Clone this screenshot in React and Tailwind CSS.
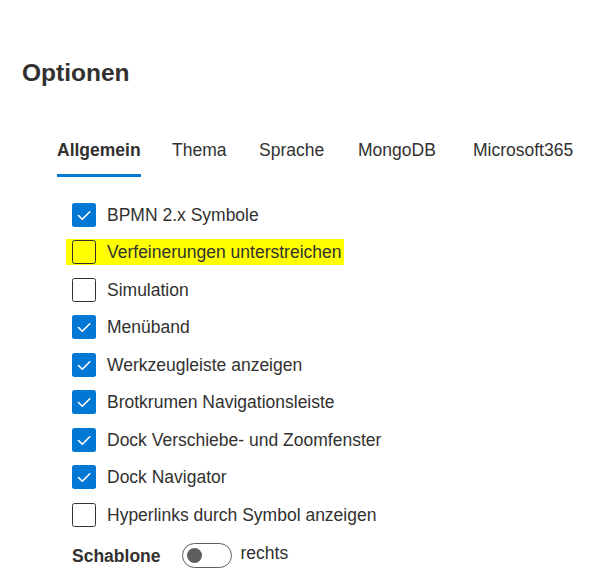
import { useState } from 'react';

const tabs = [
  { label: 'Allgemein', width: 'w-[115px]' },
  { label: 'Thema', width: 'w-[87px]' },
  { label: 'Sprache', width: 'w-[99px]' },
  { label: 'MongoDB', width: 'w-[115px]' },
  { label: 'Microsoft365', width: '' },
];

const initialOptions = [
  { label: 'BPMN 2.x Symbole', checked: true },
  { label: 'Verfeinerungen unterstreichen', checked: false, marked: true },
  { label: 'Simulation', checked: false },
  { label: 'Menüband', checked: true },
  { label: 'Werkzeugleiste anzeigen', checked: true },
  { label: 'Brotkrumen Navigationsleiste', checked: true },
  { label: 'Dock Verschiebe- und Zoomfenster', checked: true },
  { label: 'Dock Navigator', checked: true },
  { label: 'Hyperlinks durch Symbol anzeigen', checked: false },
];

function CheckBox({ checked }) {
  if (checked) {
    return (
      <span className="flex h-[24px] w-[24px] shrink-0 items-center justify-center rounded-[2.5px] bg-[#0078d4]">
        <svg width="24" height="24" viewBox="0 0 24 24" fill="none">
          <polyline points="6.5,12.5 10.3,16.3 17.8,8.8" stroke="#ffffff" strokeWidth="1.6" strokeLinecap="round" strokeLinejoin="round" />
        </svg>
      </span>
    );
  }
  return <span className="block h-[24px] w-[24px] shrink-0 rounded-[2.5px] border border-[#323130]" />;
}

export default function App() {
  const [active, setActive] = useState('Allgemein');
  const [options, setOptions] = useState(initialOptions);
  const [right, setRight] = useState(false);

  const toggle = (i) => {
    setOptions(options.map((o, idx) => (idx === i ? { ...o, checked: !o.checked } : o)));
  };

  return (
    <div className="min-h-[573px] w-[598px] bg-white text-[#323130]" style={{ fontFamily: '"Liberation Sans", Arial, sans-serif' }}>
      <h1 className="pl-[22px] pt-[57px] text-[24.5px] font-bold leading-[32px]">Optionen</h1>

      <div className="mt-[49px] flex pl-[57px]">
        {tabs.map((t) => (
          <button key={t.label} onClick={() => setActive(t.label)} className={`${t.width} flex flex-col items-start text-left`}>
            <span className="flex flex-col">
              <span className={`text-[17.5px] leading-[24px] ${active === t.label ? 'font-bold' : ''}`}>{t.label}</span>
              <span className={`mt-[12px] h-[3px] w-full ${active === t.label ? 'bg-[#0078d4]' : 'bg-transparent'}`} />
            </span>
          </button>
        ))}
      </div>

      <div className="mt-[19px] flex flex-col pl-[72px]">
        {options.map((o, i) => (
          <div key={o.label} className="flex h-[37.5px] items-center">
            <label
              onClick={() => toggle(i)}
              className={`flex cursor-pointer items-center gap-[11px] ${o.marked ? '-ml-[6px] h-[26px] bg-[#ffff00] pl-[6px] pr-[3px]' : ''}`}
            >
              <CheckBox checked={o.checked} />
              <span className="text-[17.5px] leading-[24px]">{o.label}</span>
            </label>
          </div>
        ))}

        <div className="mt-[2px] flex h-[40px] items-center">
          <span className="text-[17.5px] font-bold leading-[24px]">Schablone</span>
          <button
            onClick={() => setRight(!right)}
            className={`ml-[21px] flex h-[25px] w-[50px] items-center rounded-full border border-[#605e5c] px-[4px] ${right ? 'justify-end' : 'justify-start'}`}
          >
            <span className="block h-[15px] w-[15px] rounded-full bg-[#605e5c]" />
          </button>
          <span className="ml-[9px] pb-[6px] text-[17.5px] leading-[24px]">rechts</span>
        </div>
      </div>
    </div>
  );
}
